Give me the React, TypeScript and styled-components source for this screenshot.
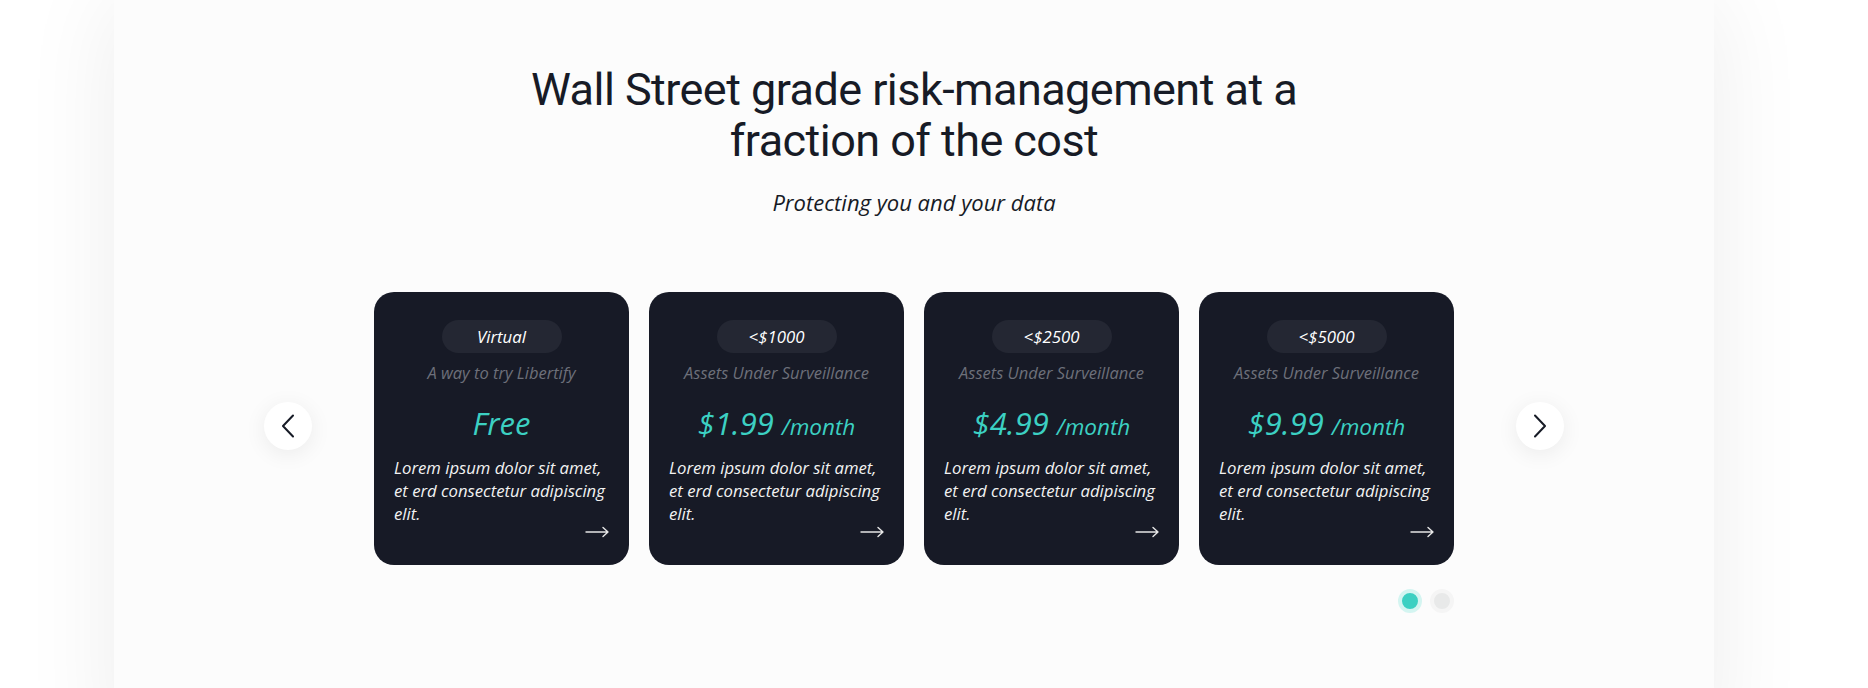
import * as React from "react";
import styled, { createGlobalStyle } from "styled-components";

const GlobalStyle = createGlobalStyle`
  html, body {
    margin: 0;
    padding: 0;
    background: #ffffff;
  }
  body {
    font-family: "Open Sans", "Liberation Sans", sans-serif;
    overflow: hidden;
  }
`;

const Page = styled.div`
  width: 1828px;
  height: 688px;
  overflow: hidden;
  background: #ffffff;
`;

const Panel = styled.section`
  width: 1600px;
  min-height: 760px;
  margin: 0 auto;
  background: #fcfcfc;
  box-shadow: 0 0 90px rgba(0, 0, 0, 0.075);
  display: flex;
  flex-direction: column;
  align-items: center;
  padding-top: 64px;
  box-sizing: border-box;
`;

const Title = styled.h1`
  margin: 0;
  max-width: 800px;
  font-family: "Roboto", "Liberation Sans", sans-serif;
  font-weight: 400;
  font-size: 45px;
  line-height: 51px;
  letter-spacing: -0.55px;
  color: #171b26;
  text-align: center;
`;

const Subtitle = styled.p`
  margin: 22px 0 0;
  font-style: italic;
  font-size: 22px;
  line-height: 28px;
  color: #171b26;
`;

const Carousel = styled.div`
  margin-top: 76px;
  display: flex;
  align-items: flex-start;
  gap: 62px;
`;

const NavButton = styled.button`
  margin-top: 110px;
  width: 48px;
  height: 48px;
  border-radius: 50%;
  border: none;
  background: #ffffff;
  box-shadow: 0 4px 22px rgba(0, 0, 0, 0.07);
  display: flex;
  align-items: center;
  justify-content: center;
  padding: 0;
  cursor: pointer;
`;

const TrackColumn = styled.div`
  display: flex;
  flex-direction: column;
`;

const Track = styled.div`
  display: flex;
  gap: 20px;
`;

const Card = styled.article`
  width: 255px;
  height: 273px;
  box-sizing: border-box;
  padding: 28px 20px 0;
  border-radius: 20px;
  background: #171a26;
  display: flex;
  flex-direction: column;
  align-items: center;
  font-style: italic;
`;

const Pill = styled.div`
  width: 120px;
  height: 33px;
  line-height: 33px;
  border-radius: 17px;
  background: #242733;
  color: #ffffff;
  font-size: 16.8px;
  text-align: center;
`;

const Caption = styled.div`
  margin-top: 7.5px;
  font-size: 16.5px;
  line-height: 24px;
  color: #6d707a;
`;

const Price = styled.div`
  margin-top: 18px;
  height: 40px;
  font-size: 31px;
  line-height: 40px;
  color: #3cd0c2;
  text-align: center;
  white-space: nowrap;
`;

const Per = styled.span`
  margin-left: 8px;
  font-size: 22.5px;
  line-height: 1;
`;

const Body = styled.p`
  margin: 13px 0 0;
  align-self: stretch;
  font-size: 16.7px;
  line-height: 23px;
  color: #f2f2f2;
`;

const ArrowRow = styled.div`
  align-self: stretch;
  display: flex;
  justify-content: flex-end;
  margin-top: 1px;
`;

const Dots = styled.div`
  margin-top: 24px;
  display: flex;
  justify-content: flex-end;
  gap: 8px;
`;

const Dot = styled.span<{ $active?: boolean }>`
  width: 16px;
  height: 16px;
  border-radius: 50%;
  background: ${(p) => (p.$active ? "#3cd0c2" : "#e8e9e9")};
  border: 4px solid ${(p) => (p.$active ? "#d4f5f1" : "#f5f5f5")};
`;

const Chevron = ({ dir }: { dir: "left" | "right" }) => (
  <svg width="12" height="24" viewBox="0 0 12 24" fill="none">
    <path
      d={dir === "left" ? "M11 1.5 L1 12 L11 22.5" : "M1 1.5 L11 12 L1 22.5"}
      stroke="#171b26"
      strokeWidth="2"
      strokeLinecap="round"
      strokeLinejoin="round"
    />
  </svg>
);

const LongArrow = () => (
  <svg width="24" height="12" viewBox="0 0 24 12" fill="none">
    <path
      d="M1 6 H23 M18 1.5 L23 6 L18 10.5"
      stroke="#e6e6e6"
      strokeWidth="1.4"
      strokeLinecap="round"
      strokeLinejoin="round"
    />
  </svg>
);

const plans = [
  { tag: "Virtual", caption: "A way to try Libertify", price: "Free", per: "" },
  { tag: "<$1000", caption: "Assets Under Surveillance", price: "$1.99", per: "/month" },
  { tag: "<$2500", caption: "Assets Under Surveillance", price: "$4.99", per: "/month" },
  { tag: "<$5000", caption: "Assets Under Surveillance", price: "$9.99", per: "/month" },
];

export default function App() {
  return (
    <Page>
      <GlobalStyle />
      <Panel>
        <Title>Wall Street grade risk-management at a fraction of the cost</Title>
        <Subtitle>Protecting you and your data</Subtitle>
        <Carousel>
          <NavButton aria-label="Previous">
            <Chevron dir="left" />
          </NavButton>
          <TrackColumn>
            <Track>
              {plans.map((p) => (
                <Card key={p.tag}>
                  <Pill>{p.tag}</Pill>
                  <Caption>{p.caption}</Caption>
                  <Price>
                    {p.price}
                    {p.per && <Per>{p.per}</Per>}
                  </Price>
                  <Body>Lorem ipsum dolor sit amet, et erd consectetur adipiscing elit.</Body>
                  <ArrowRow>
                    <LongArrow />
                  </ArrowRow>
                </Card>
              ))}
            </Track>
            <Dots>
              <Dot $active />
              <Dot />
            </Dots>
          </TrackColumn>
          <NavButton aria-label="Next">
            <Chevron dir="right" />
          </NavButton>
        </Carousel>
      </Panel>
    </Page>
  );
}
